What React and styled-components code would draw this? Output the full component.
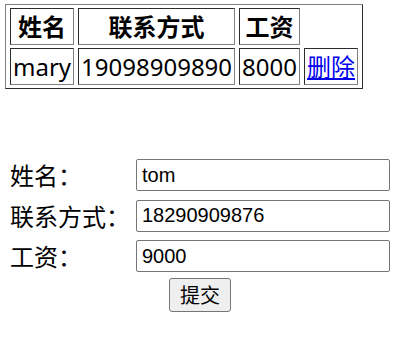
import React from "react";
import styled, { createGlobalStyle } from "styled-components";

const Global = createGlobalStyle`
  html, body { margin: 0; padding: 0; background: #fff; }
  body { font-family: "Noto Sans", "Noto Sans CJK SC", sans-serif; color: #000; }
`;

const Page = styled.div`
  display: flex;
  flex-direction: column;
  align-items: flex-start;
  padding: 4px 0 0 5px;
`;

const Table = styled.table`
  border: 1px outset grey;
  border-spacing: 4px 3px;
  font-size: 24px;
  font-family: "Noto Sans", "Noto Sans CJK SC", sans-serif;
`;

const Th = styled.th`
  border: 1px inset grey;
  padding: 1px 2px;
  line-height: 33px;
  font-weight: 700;
  text-align: center;
  white-space: nowrap;
`;

const Td = styled.td`
  border: 1px inset grey;
  padding: 1px 2px;
  line-height: 33px;
  white-space: nowrap;
`;

const DeleteLink = styled.a`
  color: #0000ee;
  text-decoration: underline;
  cursor: pointer;
`;

const Form = styled.form`
  margin: 70px 0 0 5px;
  width: 380px;
  display: flex;
  flex-direction: column;
`;

const Fields = styled.div`
  display: grid;
  grid-template-columns: 126px 254px;
  row-gap: 8.5px;
  align-items: center;
`;

const Label = styled.label`
  font-family: "Noto Sans CJK SC", sans-serif;
  font-size: 24px;
  line-height: 32px;
  white-space: nowrap;
`;

const Input = styled.input`
  box-sizing: border-box;
  width: 254px;
  height: 32px;
  margin: 0;
  padding: 1px 5px;
  border: 1px solid #767676;
  border-radius: 2px;
  font-family: "Liberation Sans", Arial, sans-serif;
  font-size: 20px;
  color: #000;
  background: #fff;
`;

const Actions = styled.div`
  display: flex;
  justify-content: center;
  margin-top: 6px;
`;

const Button = styled.button`
  box-sizing: border-box;
  height: 34px;
  padding: 0 10px;
  margin: 0;
  border: 1px solid #767676;
  border-radius: 3px;
  background: #efefef;
  font-family: "Noto Sans CJK SC", sans-serif;
  font-size: 20px;
  line-height: 32px;
  color: #000;
`;

const rows = [{ name: "mary", phone: "19098909890", salary: "8000" }];

const fields = [
  { label: "姓名：", value: "tom" },
  { label: "联系方式：", value: "18290909876" },
  { label: "工资：", value: "9000" },
];

export default function App() {
  return (
    <>
      <Global />
      <Page>
        <Table>
          <thead>
            <tr>
              <Th>姓名</Th>
              <Th>联系方式</Th>
              <Th>工资</Th>
            </tr>
          </thead>
          <tbody>
            {rows.map((r) => (
              <tr key={r.phone}>
                <Td>{r.name}</Td>
                <Td>{r.phone}</Td>
                <Td>{r.salary}</Td>
                <Td>
                  <DeleteLink href="#">删除</DeleteLink>
                </Td>
              </tr>
            ))}
          </tbody>
        </Table>
        <Form onSubmit={(e) => e.preventDefault()}>
          <Fields>
            {fields.map((f) => (
              <React.Fragment key={f.label}>
                <Label>{f.label}</Label>
                <Input defaultValue={f.value} />
              </React.Fragment>
            ))}
          </Fields>
          <Actions>
            <Button type="submit">提交</Button>
          </Actions>
        </Form>
      </Page>
    </>
  );
}
